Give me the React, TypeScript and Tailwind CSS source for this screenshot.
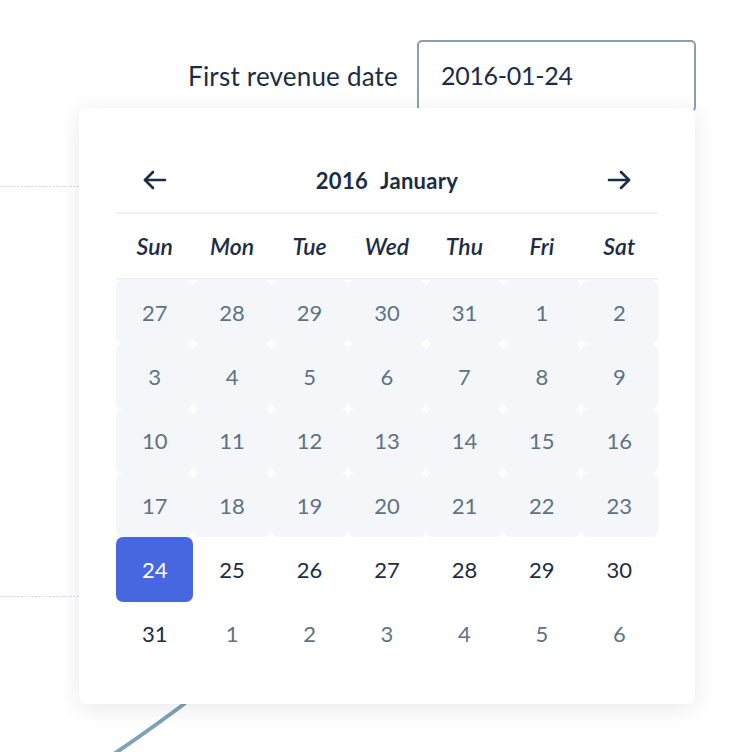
import React from "react";

const weekdays = ["Sun", "Mon", "Tue", "Wed", "Thu", "Fri", "Sat"];

type Day = { n: number; kind: "past" | "cur" | "sel" | "next" };

const rows: Day[][] = [
  [27, 28, 29, 30, 31, 1, 2].map((n) => ({ n, kind: "past" as const })),
  [3, 4, 5, 6, 7, 8, 9].map((n) => ({ n, kind: "past" as const })),
  [10, 11, 12, 13, 14, 15, 16].map((n) => ({ n, kind: "past" as const })),
  [17, 18, 19, 20, 21, 22, 23].map((n) => ({ n, kind: "past" as const })),
  [24, 25, 26, 27, 28, 29, 30].map((n, i) => ({ n, kind: i === 0 ? ("sel" as const) : ("cur" as const) })),
  [31, 1, 2, 3, 4, 5, 6].map((n, i) => ({ n, kind: i === 0 ? ("cur" as const) : ("next" as const) })),
];

function Arrow({ dir }: { dir: "left" | "right" }) {
  return (
    <svg width="26" height="22" viewBox="0 0 26 22" fill="none" stroke="#1b2d45" strokeWidth="2.6" strokeLinecap="round" strokeLinejoin="round">
      {dir === "left" ? (
        <>
          <path d="M23 11H3" />
          <path d="M11 3L3 11L11 19" />
        </>
      ) : (
        <>
          <path d="M3 11H23" />
          <path d="M15 3L23 11L15 19" />
        </>
      )}
    </svg>
  );
}

export default function App() {
  return (
    <div className="relative w-[744px] h-[752px] overflow-hidden bg-white" style={{ fontFamily: "Lato, 'Noto Sans', sans-serif" }}>
      {/* background chart drawing */}
      <svg className="absolute left-0 top-0" width="744" height="752">
        <line x1="0" y1="186.5" x2="80" y2="186.5" stroke="#cfd5dd" strokeWidth="1" strokeDasharray="2 1.5" />
        <line x1="0" y1="596.5" x2="80" y2="596.5" stroke="#cfd5dd" strokeWidth="1" strokeDasharray="2 1.5" />
        <path d="M108 758 Q150 730 200 692" stroke="#7ea3b6" strokeWidth="4" fill="none" />
      </svg>

      {/* header field */}
      <div className="relative flex justify-end items-start pt-[40px] pr-[48px]">
        <div className="flex items-center h-[72px] text-[26px] text-[#1b2d45] mr-[19px] tracking-[0.2px]">First revenue date</div>
        <div className="w-[279px] h-[72px] border-2 border-[#8d9fad] rounded-[5px] flex items-center pl-[22px] text-[25px] text-[#1b2d45] tracking-[-0.3px]">
          2016-01-24
        </div>
      </div>

      {/* calendar popup */}
      <div className="absolute left-[79px] top-[108px] w-[616px] bg-white rounded-[6px] shadow-[0_4px_24px_rgba(0,0,0,0.09)] pt-[40px] px-[37px] pb-[38px]">
        <div className="h-[64px] grid grid-cols-7 items-center">
          <div className="flex justify-center"><Arrow dir="left" /></div>
          <div className="col-span-5 flex justify-center gap-[12px] text-[22px] font-bold text-[#1b2d45] tracking-[0.3px]">
            <span>2016</span>
            <span>January</span>
          </div>
          <div className="flex justify-center"><Arrow dir="right" /></div>
        </div>
        <div className="h-[2px] bg-[#f1f2f5]" />
        <div className="h-[64px] grid grid-cols-7 items-center">
          {weekdays.map((w) => (
            <div key={w} className="text-center italic font-semibold text-[23px] text-[#1b2d45]">{w}</div>
          ))}
        </div>
        <div className="h-[2px] bg-[#f1f2f5]" />
        <div className="grid grid-cols-7 grid-rows-6 h-[386px]">
          {rows.flat().map((d, i) => {
            const cls =
              d.kind === "past"
                ? "bg-[#f5f6fa] text-[#5d7385]"
                : d.kind === "sel"
                ? "bg-[#4767e0] text-white"
                : d.kind === "cur"
                ? "text-[#1b2d45]"
                : "text-[#5d7385]";
            return (
              <div key={i} className={`flex items-center justify-center rounded-[7px] text-[22px] ${cls}`}>
                {d.n}
              </div>
            );
          })}
        </div>
      </div>
    </div>
  );
}
